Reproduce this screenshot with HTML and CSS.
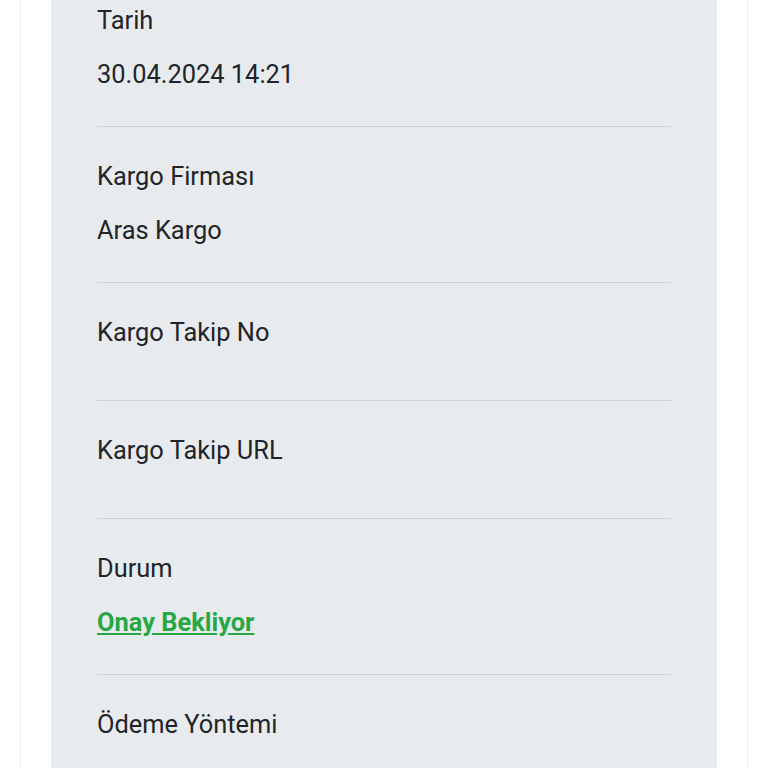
FILE: index.html
```html
<!DOCTYPE html>
<html lang="tr">
<head>
  <meta charset="UTF-8">
  <title>Sipariş Detayı</title>
  <link rel="stylesheet" href="styles.css">
</head>
<body>
  <div class="card">
    <div class="panel">
      <div class="row">
        <div class="label">Tarih</div>
        <div class="value">30.04.2024 14:21</div>
      </div>
      <div class="row">
        <div class="label">Kargo Firması</div>
        <div class="value">Aras Kargo</div>
      </div>
      <div class="row">
        <div class="label">Kargo Takip No</div>
        <div class="value"></div>
      </div>
      <div class="row">
        <div class="label">Kargo Takip URL</div>
        <div class="value"></div>
      </div>
      <div class="row">
        <div class="label">Durum</div>
        <div class="value"><a class="status" href="#">Onay Bekliyor</a></div>
      </div>
      <div class="row">
        <div class="label">Ödeme Yöntemi</div>
      </div>
    </div>
  </div>
</body>
</html>
```

FILE: styles.css
```css
html, body { margin: 0; padding: 0; background: #fff; }
body { font-family: Roboto, "Liberation Sans", sans-serif; font-size: 25.4px; color: #212529; overflow: hidden; height: 768px; }
.card { margin: 0 20px; border-left: 1px solid #eef0f2; border-right: 1px solid #eef0f2; padding: 0 30px; min-height: 768px; }
.panel { background: #e8ebee; padding: 0 46px; margin-top: -29px; min-height: 900px; }
.row { padding: 30px 0 33px 0; border-bottom: 1px solid #d0d3d6; }
.label { line-height: 38px; margin-bottom: 16px; }
.value { line-height: 38px; }
.value:empty { display: none; }
.status { color: #28a745; font-weight: bold; text-decoration: underline; }
```
